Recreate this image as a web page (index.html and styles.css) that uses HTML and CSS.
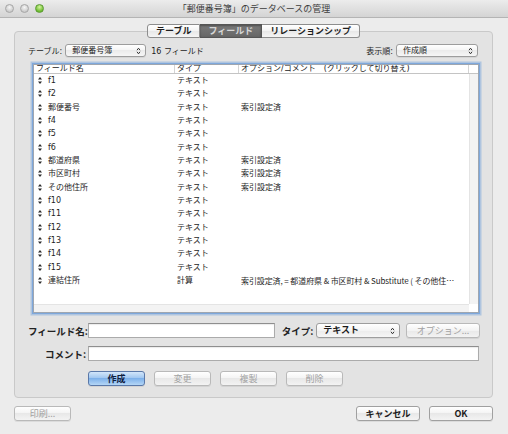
FILE: index.html
```html
<!DOCTYPE html>
<html lang="ja">
<head>
<meta charset="utf-8">
<title>データベースの管理</title>
<link rel="stylesheet" href="styles.css">
</head>
<body>
<div class="window">
  <div class="titlebar">
    <div class="lights"><span class="light"></span><span class="light"></span><span class="light green"></span></div>
    <div class="title">「郵便番号簿」のデータベースの管理</div>
    <div></div>
  </div>
  <div class="content">
    <div class="tabs">
      <span class="tab">テーブル</span><span class="tab sel">フィールド</span><span class="tab">リレーションシップ</span>
    </div>
    <div class="group">
      <div class="toprow">
        <span class="lbl">テーブル:</span>
        <span class="popup w-table"><span class="ptext">郵便番号簿</span><svg class="updown" viewBox="0 0 5 8" width="5" height="8"><path d="M1 3.2 L2.5 1.2 L4 3.2 M1 4.8 L2.5 6.8 L4 4.8" /></svg></span>
        <span class="count">16 フィールド</span>
        <span class="spacer"></span>
        <span class="lbl">表示順:</span>
        <span class="popup w-order"><span class="ptext">作成順</span><svg class="updown" viewBox="0 0 5 8" width="5" height="8"><path d="M1 3.2 L2.5 1.2 L4 3.2 M1 4.8 L2.5 6.8 L4 4.8" /></svg></span>
      </div>

      <div class="list">
        <div class="head">
          <span class="c1">フィールド名</span><span class="c2">タイプ</span><span class="c3">オプション/コメント　(クリックして切り替え)</span><span class="c4"></span>
        </div>
        <div class="body">
          <div class="rows">
            <div class="row"><span class="c1"><svg class="grip" viewBox="0 0 4 7" width="4" height="7"><path d="M2 0 L4 2.6 L0 2.6 Z M2 7 L4 4.4 L0 4.4 Z"/></svg>f1</span><span class="c2">テキスト</span><span class="c3"></span></div>
            <div class="row"><span class="c1"><svg class="grip" viewBox="0 0 4 7" width="4" height="7"><path d="M2 0 L4 2.6 L0 2.6 Z M2 7 L4 4.4 L0 4.4 Z"/></svg>f2</span><span class="c2">テキスト</span><span class="c3"></span></div>
            <div class="row"><span class="c1"><svg class="grip" viewBox="0 0 4 7" width="4" height="7"><path d="M2 0 L4 2.6 L0 2.6 Z M2 7 L4 4.4 L0 4.4 Z"/></svg>郵便番号</span><span class="c2">テキスト</span><span class="c3">索引設定済</span></div>
            <div class="row"><span class="c1"><svg class="grip" viewBox="0 0 4 7" width="4" height="7"><path d="M2 0 L4 2.6 L0 2.6 Z M2 7 L4 4.4 L0 4.4 Z"/></svg>f4</span><span class="c2">テキスト</span><span class="c3"></span></div>
            <div class="row"><span class="c1"><svg class="grip" viewBox="0 0 4 7" width="4" height="7"><path d="M2 0 L4 2.6 L0 2.6 Z M2 7 L4 4.4 L0 4.4 Z"/></svg>f5</span><span class="c2">テキスト</span><span class="c3"></span></div>
            <div class="row"><span class="c1"><svg class="grip" viewBox="0 0 4 7" width="4" height="7"><path d="M2 0 L4 2.6 L0 2.6 Z M2 7 L4 4.4 L0 4.4 Z"/></svg>f6</span><span class="c2">テキスト</span><span class="c3"></span></div>
            <div class="row"><span class="c1"><svg class="grip" viewBox="0 0 4 7" width="4" height="7"><path d="M2 0 L4 2.6 L0 2.6 Z M2 7 L4 4.4 L0 4.4 Z"/></svg>都道府県</span><span class="c2">テキスト</span><span class="c3">索引設定済</span></div>
            <div class="row"><span class="c1"><svg class="grip" viewBox="0 0 4 7" width="4" height="7"><path d="M2 0 L4 2.6 L0 2.6 Z M2 7 L4 4.4 L0 4.4 Z"/></svg>市区町村</span><span class="c2">テキスト</span><span class="c3">索引設定済</span></div>
            <div class="row"><span class="c1"><svg class="grip" viewBox="0 0 4 7" width="4" height="7"><path d="M2 0 L4 2.6 L0 2.6 Z M2 7 L4 4.4 L0 4.4 Z"/></svg>その他住所</span><span class="c2">テキスト</span><span class="c3">索引設定済</span></div>
            <div class="row"><span class="c1"><svg class="grip" viewBox="0 0 4 7" width="4" height="7"><path d="M2 0 L4 2.6 L0 2.6 Z M2 7 L4 4.4 L0 4.4 Z"/></svg>f10</span><span class="c2">テキスト</span><span class="c3"></span></div>
            <div class="row"><span class="c1"><svg class="grip" viewBox="0 0 4 7" width="4" height="7"><path d="M2 0 L4 2.6 L0 2.6 Z M2 7 L4 4.4 L0 4.4 Z"/></svg>f11</span><span class="c2">テキスト</span><span class="c3"></span></div>
            <div class="row"><span class="c1"><svg class="grip" viewBox="0 0 4 7" width="4" height="7"><path d="M2 0 L4 2.6 L0 2.6 Z M2 7 L4 4.4 L0 4.4 Z"/></svg>f12</span><span class="c2">テキスト</span><span class="c3"></span></div>
            <div class="row"><span class="c1"><svg class="grip" viewBox="0 0 4 7" width="4" height="7"><path d="M2 0 L4 2.6 L0 2.6 Z M2 7 L4 4.4 L0 4.4 Z"/></svg>f13</span><span class="c2">テキスト</span><span class="c3"></span></div>
            <div class="row"><span class="c1"><svg class="grip" viewBox="0 0 4 7" width="4" height="7"><path d="M2 0 L4 2.6 L0 2.6 Z M2 7 L4 4.4 L0 4.4 Z"/></svg>f14</span><span class="c2">テキスト</span><span class="c3"></span></div>
            <div class="row"><span class="c1"><svg class="grip" viewBox="0 0 4 7" width="4" height="7"><path d="M2 0 L4 2.6 L0 2.6 Z M2 7 L4 4.4 L0 4.4 Z"/></svg>f15</span><span class="c2">テキスト</span><span class="c3"></span></div>
            <div class="row"><span class="c1"><svg class="grip" viewBox="0 0 4 7" width="4" height="7"><path d="M2 0 L4 2.6 L0 2.6 Z M2 7 L4 4.4 L0 4.4 Z"/></svg>連結住所</span><span class="c2">計算</span><span class="c3 long">索引設定済, = 都道府県 &amp; 市区町村 &amp; Substitute ( その他住…</span></div>
          </div>
          <div class="vgutter"></div>
        </div>
        <div class="hgutter"><span class="hbar"></span><span class="corner"></span></div>
      </div>

      <div class="frow first">
        <span class="flabel">フィールド名:</span>
        <span class="input w-name"></span>
        <span class="flabel inline">タイプ:</span>
        <span class="popup w-type"><span class="ptext bold">テキスト</span><svg class="updown" viewBox="0 0 5 8" width="5" height="8"><path d="M1 3.2 L2.5 1.2 L4 3.2 M1 4.8 L2.5 6.8 L4 4.8" /></svg></span>
        <span class="btn dis w-opt">オプション...</span>
      </div>
      <div class="frow second">
        <span class="flabel">コメント:</span>
        <span class="input grow"></span>
      </div>
      <div class="brow">
        <span class="btn default w-small">作成</span>
        <span class="btn dis w-small">変更</span>
        <span class="btn dis w-small">複製</span>
        <span class="btn dis w-small">削除</span>
      </div>
    </div>

    <div class="footer">
      <span class="btn dis w-print">印刷...</span>
      <span class="spacer"></span>
      <span class="btn w-foot">キャンセル</span>
      <span class="btn w-foot">OK</span>
    </div>
  </div>
</div>
</body>
</html>
```
FILE: styles.css
```css
* { box-sizing: border-box; }
html, body { margin: 0; padding: 0; }
body {
  width: 508px;
  height: 434px;
  overflow: hidden;
  background: #ececec;
  font-family: "DejaVu Sans", "Noto Sans CJK JP", sans-serif;
  color: #1c1c1c;
}
.window { width: 508px; height: 434px; }

/* title bar */
.titlebar {
  height: 18px;
  display: grid;
  grid-template-columns: 1fr auto 1fr;
  align-items: center;
  background: linear-gradient(#ececec, #d4d4d4);
  border-bottom: 1px solid #b4b4b4;
}
.lights { display: flex; gap: 6px; padding-left: 5px; }
.light {
  width: 9px; height: 9px; border-radius: 50%;
  background: radial-gradient(circle at 50% 35%, #f6f6f6, #cbcbcb 70%);
  border: 1px solid #a6a6a6;
}
.light.green {
  background: radial-gradient(circle at 50% 30%, #d6f7a0, #6cbb2f 70%);
  border-color: #5b9a33;
}
.title { font-size: 9px; color: #3c3c3c; line-height: 12px; font-family: "Noto Sans CJK JP", sans-serif; }

/* content */
.content { padding: 6px 15px 0 14px; }
.tabs {
  display: flex;
  justify-content: center;
  position: relative;
  z-index: 1;
  height: 14px;
}
.tab {
  height: 14px;
  padding: 0 8px;
  font-size: 9px;
  font-weight: bold;
  line-height: 12px;
  color: #1e1e1e;
  border: 1px solid #8d8d8d;
  border-left-width: 0;
  background: linear-gradient(#ffffff, #f3f3f3 50%, #e7e7e7 50%, #f5f5f5);
  font-family: "Noto Sans CJK JP", sans-serif;
}
.tab:first-child { border-left-width: 1px; border-radius: 3px 0 0 3px; }
.tab:last-child { border-radius: 0 3px 3px 0; }
.tab.sel {
  background: linear-gradient(#7a7a7a, #666666);
  color: #d6d6d6;
  border-color: #555;
  box-shadow: inset 0 1px 2px rgba(0,0,0,.35);
}

.group {
  margin-top: -7px;
  border: 1px solid #c9c9c9;
  border-radius: 4px;
  background: #e3e3e3;
  padding: 12px 12px 11px 13px;
}

.toprow {
  display: flex;
  align-items: center;
  height: 13px;
  padding-right: 2px;
  font-size: 8px;
}
.lbl { font-size: 8px; margin-right: 3px; color: #222; }
.count { margin-left: 5px; font-size: 8px; }
.spacer { flex: 1; }

.popup {
  display: flex;
  align-items: center;
  height: 13px;
  padding: 0 4px 0 6px;
  border: 1px solid #9d9d9d;
  border-radius: 3px;
  background: linear-gradient(#ffffff, #f4f4f4 50%, #ebebeb 50%, #f6f6f6);
  box-shadow: 0 1px 0 rgba(0,0,0,.06);
  font-size: 8px;
}
.ptext { flex: 1; line-height: 11px; }
.ptext.bold { font-weight: bold; font-size: 9px; }
.updown { fill: none; stroke: #333; stroke-width: 1; }
.w-table { width: 81px; }
.w-order { width: 82px; }
.w-type { width: 84px; height: 15px; margin-left: 3px; }

/* list */
.list {
  margin: 7px 1px 0 5px;
  height: 249px;
  border: 1px solid #9fa6b0;
  box-shadow: 0 0 0 1px #7ea8dc, 0 0 0 2.5px rgba(126,168,220,.5);
  background: #fff;
  display: flex;
  flex-direction: column;
  font-size: 8px;
}
.head {
  display: grid;
  grid-template-columns: 141px 64px 1fr 9px;
  height: 9px;
  border-bottom: 1px solid #c4c4c4;
  line-height: 8px;
  color: #222;
}
.head span { padding-left: 2px; border-right: 1px solid #d4d4d4; white-space: nowrap; overflow: hidden; }
.head .c4 { border-right: 0; }
.body { flex: 1; display: flex; min-height: 0; }
.rows { flex: 1; }
.vgutter { width: 9px; background: #f3f3f3; border-left: 1px solid #e4e4e4; }
.row {
  display: grid;
  grid-template-columns: 141px 64px 1fr;
  height: 13.33px;
  line-height: 13.33px;
  color: #1e1e1e;
}
.row span { white-space: nowrap; }
.row .c1 { padding-left: 4px; display: flex; align-items: center; }
.row .c2, .row .c3 { padding-left: 2px; }
.row .c3.long { font-family: "Noto Sans CJK JP", sans-serif; letter-spacing: -0.1px; }
.grip { fill: #2a2a2a; margin-right: 6px; flex: none; }
.hgutter { height: 8px; display: flex; }
.hbar { flex: 1; background: #f3f3f3; border-top: 1px solid #e4e4e4; }
.corner { width: 9px; background: #fff; }

/* form */
.frow { display: flex; align-items: center; height: 15px; }
.frow.first { margin-top: 10px; }
.frow.second { margin-top: 8px; }
.flabel {
  width: 58px;
  margin-right: 2px;
  text-align: right;
  font-weight: bold;
  font-size: 9.5px;
  color: #222;
  font-family: "Noto Sans CJK JP", sans-serif;
  white-space: nowrap;
}
.flabel.inline { width: auto; margin-left: 7px; margin-right: 0; }
.input {
  height: 15px;
  background: #fff;
  border: 1px solid #ababab;
  border-top-color: #8e8e8e;
  box-shadow: inset 0 1px 1px rgba(0,0,0,.08);
}
.w-name { width: 187px; }
.grow { flex: 1; margin-right: 1px; }

.btn {
  display: flex;
  align-items: center;
  justify-content: center;
  height: 15px;
  border: 1px solid #a0a0a0;
  border-radius: 3px;
  background: linear-gradient(#ffffff, #f3f3f3 50%, #e8e8e8 50%, #f3f3f3);
  box-shadow: 0 1px 0 rgba(0,0,0,.07);
  font-size: 9px;
  font-weight: bold;
  color: #1c1c1c;
  font-family: "Noto Sans CJK JP", sans-serif;
  white-space: nowrap;
}
.btn.dis { color: #a2a2a2; font-weight: normal; border-color: #b9b9b9; }
.btn.default {
  background: linear-gradient(#d3e6fa, #9cc4ef 50%, #7eb1ea 50%, #b4d6f6);
  border-color: #5a78a8;
  color: #102040;
}
.w-opt { width: 74px; margin-left: 6px; height: 15px; }

.brow { display: flex; gap: 9px; margin-top: 10px; padding-left: 60px; }
.w-small { width: 57px; }

.footer { display: flex; align-items: center; margin-top: 8px; gap: 9px; }
.w-print { width: 57px; height: 15px; }
.w-foot { width: 64px; height: 15px; }
```
